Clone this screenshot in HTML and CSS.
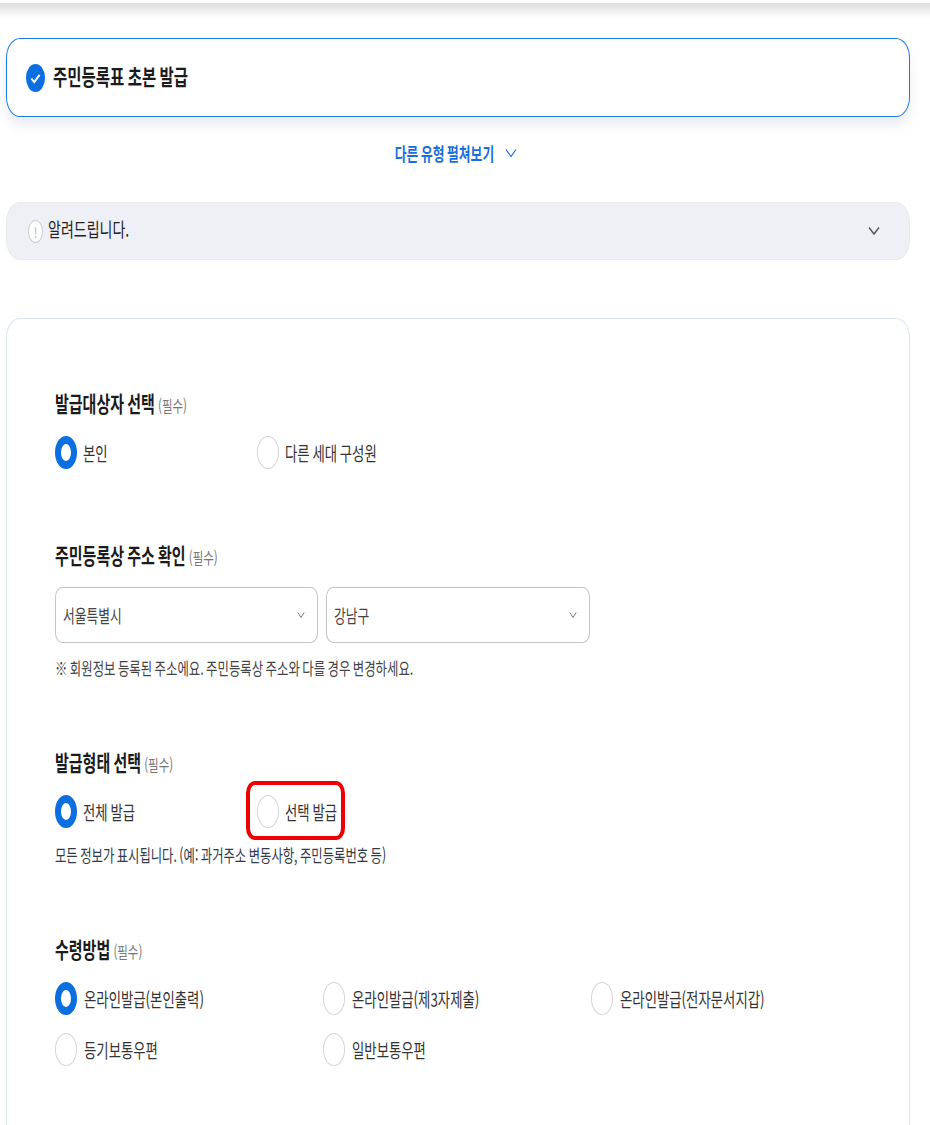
FILE: index.html
```html
<!DOCTYPE html>
<html lang="ko">
<head>
    <title>주민등록표 초본 발급</title>
    <meta charset="UTF-8">
    <link rel="stylesheet" href="styles.css">
</head>
<body>
    <div class="top-shade"></div>

    <div class="type-card">
        <svg class="check-icon" viewBox="0 0 19 28">
            <ellipse cx="9.5" cy="14" rx="9.5" ry="14" fill="#0b6fe0"/>
            <path d="M5.4 14.5 L8.2 18 L13.6 10.8" fill="none" stroke="#fff" stroke-width="2"/>
        </svg>
        <span class="tall type-title">주민등록표 초본 발급</span>
    </div>

    <div class="more-types">
        <span class="tall">다른 유형 펼쳐보기</span>
        <svg class="more-arrow" viewBox="0 0 12 10">
            <path d="M1 1.5 L6 8.5 L11 1.5" fill="none" stroke="#1a73e0" stroke-width="1.2"/>
        </svg>
    </div>

    <div class="notice">
        <span class="notice-icon"><span class="tall">!</span></span>
        <span class="tall notice-text">알려드립니다.</span>
        <svg class="notice-arrow" viewBox="0 0 12 10">
            <path d="M1 1.5 L6 8 L11 1.5" fill="none" stroke="#555" stroke-width="1.4"/>
        </svg>
    </div>

    <div class="form-card">
        <div class="field field-target">
            <div class="field-title"><span class="tall"><b>발급대상자 선택</b> <small>(필수)</small></span></div>
            <div class="options options-two">
                <label class="option"><i class="radio on"></i><span class="tall">본인</span></label>
                <label class="option"><i class="radio"></i><span class="tall">다른 세대 구성원</span></label>
            </div>
        </div>

        <div class="field field-address">
            <div class="field-title"><span class="tall"><b>주민등록상 주소 확인</b> <small>(필수)</small></span></div>
            <div class="selects">
                <div class="select">
                    <span class="tall">서울특별시</span>
                    <svg class="select-arrow" viewBox="0 0 8 8"><path d="M.8 1.5 L4 6.5 L7.2 1.5" fill="none" stroke="#777" stroke-width="1"/></svg>
                </div>
                <div class="select">
                    <span class="tall">강남구</span>
                    <svg class="select-arrow" viewBox="0 0 8 8"><path d="M.8 1.5 L4 6.5 L7.2 1.5" fill="none" stroke="#777" stroke-width="1"/></svg>
                </div>
            </div>
            <div class="hint"><span class="tall">※ 회원정보 등록된 주소에요. 주민등록상 주소와 다를 경우 변경하세요.</span></div>
        </div>

        <div class="field field-form">
            <div class="field-title"><span class="tall"><b>발급형태 선택</b> <small>(필수)</small></span></div>
            <div class="options options-two">
                <label class="option"><i class="radio on"></i><span class="tall">전체 발급</span></label>
                <label class="option"><i class="radio"></i><span class="tall">선택 발급</span><em class="highlight"></em></label>
            </div>
            <div class="hint hint-dark"><span class="tall">모든 정보가 표시됩니다. (예: 과거주소 변동사항, 주민등록번호 등)</span></div>
        </div>

        <div class="field field-receive">
            <div class="field-title"><span class="tall"><b>수령방법</b> <small>(필수)</small></span></div>
            <div class="options options-three">
                <label class="option"><i class="radio on"></i><span class="tall">온라인발급(본인출력)</span></label>
                <label class="option"><i class="radio"></i><span class="tall">온라인발급(제3자제출)</span></label>
                <label class="option"><i class="radio"></i><span class="tall">온라인발급(전자문서지갑)</span></label>
                <label class="option"><i class="radio"></i><span class="tall">등기보통우편</span></label>
                <label class="option"><i class="radio"></i><span class="tall">일반보통우편</span></label>
            </div>
        </div>
    </div>
</body>
</html>
```

FILE: styles.css
```css
html, body {
    margin: 0;
    height: 1125px;
    overflow: hidden;
}
body {
    background: #fff;
    color: #222;
    font-family: "Noto Sans CJK KR", "Noto Sans", sans-serif;
}
/* the capture is stretched vertically, so glyphs get stretched too */
.tall {
    display: inline-block;
    transform: scaleY(1.42);
    white-space: nowrap;
    word-spacing: -1px;
}
.top-shade {
    height: 16px;
    margin-top: 3px;
    background: linear-gradient(#dedede, #fff);
}
.type-card {
    display: flex;
    align-items: center;
    gap: 8px;
    box-sizing: border-box;
    height: 79px;
    margin: 19px 20px 0 6px;
    padding-left: 19px;
    background: #fff;
    border: 1px solid #1a7be8;
    border-radius: 14px / 20px;
    box-shadow: 0 8px 12px rgba(40, 70, 130, 0.1);
}
.check-icon {
    width: 19px;
    height: 28px;
}
.type-title {
    margin-bottom: 6px;
    font-size: 15.5px;
    font-weight: 700;
    color: #1b1b1b;
}
.more-types {
    display: flex;
    align-items: center;
    justify-content: center;
    gap: 11px;
    height: 24px;
    margin-top: 24px;
    padding-right: 18px;
    color: #1a6fdc;
    font-size: 12.8px;
    font-weight: 700;
}
.more-arrow {
    width: 12px;
    height: 10px;
}
.notice {
    display: flex;
    align-items: center;
    box-sizing: border-box;
    height: 58px;
    margin: 37px 20px 0 6px;
    padding: 0 29px 0 21px;
    background: #eff0f5;
    border: 1px solid #e9ebf0;
    border-radius: 14px / 20px;
}
.notice-icon {
    display: flex;
    align-items: center;
    justify-content: center;
    box-sizing: border-box;
    width: 15px;
    height: 23px;
    margin-right: 5px;
    background: #fff;
    border: 1px solid #c9ced8;
    border-radius: 50%;
    color: #aaa;
    font-size: 10px;
}
.notice-text {
    margin-bottom: 6px;
    font-size: 14px;
}
.notice-arrow {
    width: 12px;
    height: 10px;
    margin-left: auto;
}
.form-card {
    box-sizing: border-box;
    height: 807px;
    margin: 58px 20px 0 6px;
    padding: 0 48px;
    background: #fff;
    border: 1px solid #d9e5f7;
    border-bottom: none;
    border-radius: 14px 14px 0 0 / 20px 20px 0 0;
}
.field-title {
    display: flex;
    align-items: center;
    height: 24px;
    font-size: 15px;
}
.field-title b {
    color: #1b1b1b;
}
.field-title small {
    color: #777;
    font-size: 11.5px;
}
.field-target {
    padding-top: 71px;
}
.field-address {
    padding-top: 57px;
}
.field-form {
    padding-top: 69px;
}
.field-receive {
    padding-top: 69px;
}
.options {
    display: grid;
    margin-top: 20px;
    grid-auto-rows: 51px;
}
.options-two {
    grid-template-columns: 202px 202px;
}
.options-three {
    grid-template-columns: 268px 268px 268px;
}
.option {
    position: relative;
    display: flex;
    align-items: center;
    gap: 6px;
    height: 36px;
    color: #333;
    font-size: 13.4px;
}
.options-three .option {
    gap: 7px;
}
.radio {
    flex: none;
    box-sizing: border-box;
    width: 22px;
    height: 33px;
    background: #fff;
    border: 1px solid #d5d5d8;
    border-radius: 50%;
}
.radio.on {
    border-color: #0b6fe0;
    border-width: 8px 6px;
}
.highlight {
    position: absolute;
    left: -11px;
    top: -12px;
    box-sizing: border-box;
    width: 99px;
    height: 59px;
    border: 4px solid #ee0000;
    border-radius: 9px / 12px;
}
.selects {
    display: flex;
    gap: 8px;
    margin-top: 21px;
}
.select {
    display: flex;
    align-items: center;
    justify-content: space-between;
    box-sizing: border-box;
    width: 263px;
    height: 56px;
    padding: 0 12px 0 7px;
    border: 1px solid #c4c4c4;
    border-radius: 7px / 10px;
    color: #444;
    font-size: 12.8px;
}
.select + .select {
    width: 264px;
}
.select-arrow {
    width: 8px;
    height: 8px;
}
.hint {
    display: flex;
    align-items: center;
    height: 24px;
    margin-top: 13px;
    color: #444;
    font-size: 12.4px;
}
.hint-dark {
    margin-top: -1px;
    color: #2f3a4a;
    font-size: 12.35px;
}
```
